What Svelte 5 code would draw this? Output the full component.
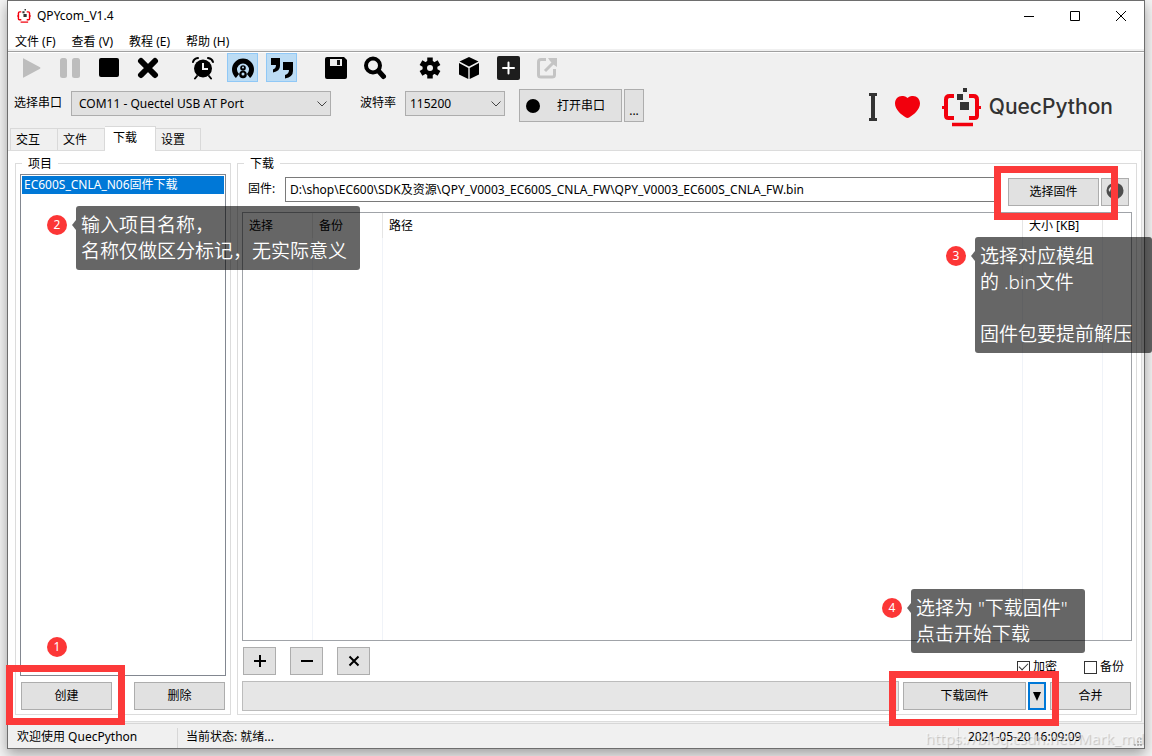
<script>
  const menus = ['文件 (F)', '查看 (V)', '教程 (E)', '帮助 (H)'];
  const tabs = ['交互', '文件', '下载', '设置'];
  let activeTab = $state('下载');
  let firmware = $state('D:\\shop\\EC600\\SDK及资源\\QPY_V0003_EC600S_CNLA_FW\\QPY_V0003_EC600S_CNLA_FW.bin');
  let encrypt = $state(true);
  let backup = $state(false);
</script>

{#snippet brackets()}
  <g fill="none" stroke="#f2000d" stroke-width="4">
    <path d="M12 8H7.500Q4 8 4 11.500V27.500Q4 30 6.500 30H12M27 8H31.500Q35 8 35 11.500V27.500Q35 30 32.500 30H27" />
    <path d="M0 19.500H4M35 19.500H39" stroke-width="3" />
    <path d="M10 36.500H31" stroke-width="3.500" />
  </g>
  <path fill="#333" d="M21 0h4v4h-4zM15 6h6v6h-6zM18 14h9v8h-9z" />
{/snippet}

<div class="page">
  <main class="window">
    <header class="titlebar">
      <svg class="app-icon" viewBox="0 0 39 39" aria-hidden="true">{@render brackets()}</svg>
      <h1>QPYcom_V1.4</h1>
      <div class="window-buttons">
        <button aria-label="最小化"><svg viewBox="0 0 10 10"><path d="M0 5.500h10" /></svg></button>
        <button aria-label="最大化"><svg viewBox="0 0 10 10"><path d="M.5.5h9v9h-9z" /></svg></button>
        <button aria-label="关闭"><svg viewBox="0 0 10 10"><path d="M0 0l10 10M10 0L0 10" /></svg></button>
      </div>
    </header>

    <nav class="menubar">
      {#each menus as menu}<button>{menu}</button>{/each}
    </nav>

    <div class="header">
      <div class="controls">
        <div class="toolbar">
          <div class="tool-group">
            <button aria-label="运行" disabled><svg viewBox="0 0 24 24"><path fill="#bdbdbd" d="M3 2.500Q3 2 3.700 2.400L20 11.200Q21 12 20 12.700L3.700 21.600Q3 22 3 21.300z" /></svg></button>
            <button aria-label="暂停" disabled><svg viewBox="0 0 24 24"><rect fill="#bdbdbd" x="1" y="2" width="7" height="20" rx="2.500" /><rect fill="#bdbdbd" x="13" y="2" width="8" height="20" rx="2.500" /></svg></button>
            <button aria-label="停止"><svg viewBox="0 0 24 24"><rect x="1" y="2" width="20" height="19" rx="2" /></svg></button>
            <button aria-label="清除"><svg viewBox="0 0 24 24"><path fill="none" stroke="#000" stroke-width="6" stroke-linecap="round" d="M4 5l14 14M18 5L4 19" /></svg></button>
          </div>
          <div class="tool-group">
            <button aria-label="定时">
              <svg viewBox="0 0 24 24">
                <circle cx="11" cy="12.500" r="9" />
                <path fill="none" stroke="#000" stroke-width="2" stroke-linecap="round" d="M1 6Q2 2.500 6 2M21 6Q20 2.500 16 2M5 20l-2 2.500M17 20l2 2.500" />
                <path fill="none" stroke="#efefef" stroke-width="2" d="M11 7v6h5" />
              </svg>
            </button>
            <button class="on" aria-label="连接">
              <svg viewBox="0 0 24 24">
                <path fill="none" stroke="#000" stroke-width="5" d="M6.500 20A8.500 8.500 0 1 1 17.500 20" />
                <circle cx="12" cy="12" r="2.800" /><circle cx="12" cy="18.500" r="3.800" />
                <circle cx="12" cy="11.500" r="1" fill="#bcdcf4" /><circle cx="12" cy="18" r="1.500" fill="#bcdcf4" />
              </svg>
            </button>
            <button class="on" aria-label="引用">
              <svg viewBox="0 0 24 24"><path d="M1 2h9v8q0 5-7 6.500v-3q3-1 3-4.500H1zM13 6h10v9q0 6-8 7.500V19q4-1 4-5h-6z" /></svg>
            </button>
          </div>
          <div class="tool-group">
            <button aria-label="保存"><svg viewBox="0 0 24 24"><path d="M2 1h17l3 3v17q0 2-2 2H2q-2 0-2-2V3q0-2 2-2z" /><path fill="#efefef" d="M5 3h12v7H5z" /><path fill="#111" d="M12 4h3v5h-3z" /></svg></button>
            <button aria-label="搜索"><svg viewBox="0 0 24 24"><circle cx="9" cy="9.500" r="7" fill="none" stroke="#000" stroke-width="4" /><path fill="none" stroke="#000" stroke-width="5" stroke-linecap="round" d="M14.500 15l5 5.500" /></svg></button>
          </div>
          <div class="tool-group">
            <button aria-label="设置">
              <svg viewBox="0 0 24 24">
                <g stroke="#000" stroke-width="5.500"><path d="M11 1.500v21M2 6.700l18 10.600M2 17.300L20 6.700" /></g>
                <circle cx="11" cy="12" r="7.500" /><circle cx="11" cy="12" r="3" fill="#efefef" />
              </svg>
            </button>
            <button aria-label="模块"><svg viewBox="0 0 24 24"><path d="M11 1l9.500 4.500L11 10.500 1.500 5.500zM1 7l9.300 5v11L1 18.500zM21 7l-9.300 5v11L21 18.500z" /></svg></button>
            <button aria-label="新增"><svg viewBox="0 0 24 24"><rect width="23" height="24" rx="2" fill="#1d1d1d" /><path fill="none" stroke="#fff" stroke-width="2" stroke-linecap="round" d="M11.500 6.500v11M6 12h11" /></svg></button>
            <button aria-label="导出" disabled><svg viewBox="0 0 24 24"><path fill="none" stroke="#c4c4c4" stroke-width="3" d="M10 3.500H5Q2.500 3.500 2.500 6v13Q2.500 21 5 21h11q2.500 0 2.500-2v-6M9 15L18 6" /><path fill="#c4c4c4" d="M12 2h9v9l-3-2-4-4z" /></svg></button>
          </div>
        </div>

        <div class="port-row">
          <label class="port-label" for="port">选择串口</label>
          <span class="combo port">
            <select id="port"><option>COM11 - Quectel USB AT Port</option></select>
            <svg viewBox="0 0 10 6" aria-hidden="true"><path d="M.5.5L5 5 9.500.5" /></svg>
          </span>
          <label class="baud-label" for="baud">波特率</label>
          <span class="combo baud">
            <select id="baud"><option>115200</option></select>
            <svg viewBox="0 0 10 6" aria-hidden="true"><path d="M.5.5L5 5 9.500.5" /></svg>
          </span>
          <button class="btn open"><i class="dot"></i><span>打开串口</span></button>
          <button class="btn more">...</button>
        </div>
      </div>

      <div class="brand">
        <svg class="letter" viewBox="0 0 8 28" aria-hidden="true"><path fill="#333" d="M0 0h8v3H6v22h2v3H0v-3h2V3H0z" /></svg>
        <svg class="heart" viewBox="0 0 25 22" aria-hidden="true"><path fill="#f2000d" d="M12.500 2C10 0 8.500 0 7 0 3 0 0 3 0 7.500 0 14 7 19 10.500 21.300Q12.500 22.700 14.500 21.300C18 19 25 14 25 7.500 25 3 22 0 18 0 16.500 0 15 0 12.500 2z" /></svg>
        <svg class="logo" viewBox="0 0 39 39" aria-hidden="true">{@render brackets()}</svg>
        <span>QuecPython</span>
      </div>
    </div>

    <div class="tabs" role="tablist">
      {#each tabs as tab}
        <button role="tab" aria-selected={tab === activeTab} class:active={tab === activeTab} onclick={() => (activeTab = tab)}>{tab}</button>
      {/each}
    </div>

    <section class="panel">
      <fieldset class="projects">
        <legend>项目</legend>
        <ul><li>EC600S_CNLA_N06固件下载</li></ul>
        <div class="project-actions">
          <button class="btn">创建</button>
          <button class="btn">删除</button>
        </div>
      </fieldset>

      <fieldset class="download">
        <legend>下载</legend>
        <div class="firmware-row">
          <label for="firmware">固件:</label>
          <input id="firmware" type="text" bind:value={firmware} />
          <button class="btn choose">选择固件</button>
          <button class="btn globe" aria-label="在线固件">
            <svg viewBox="0 0 18 18"><path fill="#4d4d4d" d="M9 0Q17 0 17.500 7.500 17.500 12 13 15L9 18 5 15Q.5 12 .5 7.500 1 0 9 0z" /><path fill="#e1e1e1" d="M2.500 7Q4 3 8 2.500L7 5 4.500 6.500 4 9z" /></svg>
          </button>
        </div>

        <div class="table-box">
          <table>
            <colgroup><col class="c-pick" /><col class="c-pick" /><col /><col class="c-size" /><col class="c-end" /></colgroup>
            <thead><tr><th>选择</th><th>备份</th><th>路径</th><th>大小 [KB]</th><th></th></tr></thead>
            <tbody><tr><td></td><td></td><td></td><td></td><td></td></tr></tbody>
          </table>
        </div>

        <div class="edit-row">
          <button class="btn" aria-label="添加"><svg viewBox="0 0 14 14"><path d="M7 1v12M1 7h12" /></svg></button>
          <button class="btn" aria-label="移除"><svg viewBox="0 0 14 14"><path d="M1 7h12" /></svg></button>
          <button class="btn" aria-label="清空"><svg viewBox="0 0 14 14"><path d="M2.500 2.500l9 9M11.500 2.500l-9 9" /></svg></button>
          <div class="checks">
            <label><input type="checkbox" bind:checked={encrypt} />加密</label>
            <label><input type="checkbox" bind:checked={backup} />备份</label>
          </div>
        </div>

        <div class="run-row">
          <div class="progress" role="progressbar" aria-valuenow="0" aria-label="进度"></div>
          <button class="btn start">下载固件</button>
          <button class="btn drop" aria-label="更多下载方式"><svg viewBox="0 0 8 9"><path d="M0 0h8L4 9z" /></svg></button>
          <button class="btn merge">合并</button>
        </div>
      </fieldset>
    </section>

    <footer class="status">
      <span class="welcome">欢迎使用 QuecPython</span>
      <span class="state">当前状态: 就绪...</span>
      <time datetime="2021-05-20T16:09:09">2021-05-20 16:09:09</time>
      <svg class="grip" viewBox="0 0 8 8" aria-hidden="true"><path d="M6 0h2v2H6zM3 3h2v2H3zM6 3h2v2H6zM0 6h2v2H0zM3 6h2v2H3zM6 6h2v2H6z" /></svg>
    </footer>
  </main>

  <div class="watermark">https://blog.csdn.net/Mark_md</div>

  <div class="frame create-frame"></div>
  <div class="frame choose-frame"></div>
  <div class="frame start-frame"></div>

  <div class="note note-1"><b>1</b></div>
  <div class="note note-2"><b>2</b><p>输入项目名称，<br />名称仅做区分标记，无实际意义</p></div>
  <div class="note note-3"><b>3</b><p>选择对应模组<br />的 .bin文件<br /><br />固件包要提前解压</p></div>
  <div class="note note-4"><b>4</b><p>选择为 "下载固件"<br />点击开始下载</p></div>
</div>

<style>
  :global(body) { margin: 0; }
  .page, .page * { box-sizing: border-box; }
  .page {
    position: relative;
    display: flex;
    height: 100vh;
    min-height: 480px;
    padding: 0 7px 7px;
    overflow: hidden;
    background: #f4f4f4;
    font: 12px/18px "Noto Sans", "Noto Sans CJK SC", sans-serif;
    color: #000;
  }
  button, input, select { font: inherit; color: inherit; border-radius: 0; }
  button { padding: 0; border: 0; background: none; }
  svg { display: block; }

  .window {
    flex: 1;
    min-width: 0;
    display: flex;
    flex-direction: column;
    border: 1px solid #6e6e6e;
    background: #f0f0f0;
    box-shadow: 0 5px 12px rgba(0, 0, 0, 0.35);
  }

  .titlebar { display: flex; align-items: center; height: 30px; padding-left: 9px; background: #fff; }
  .app-icon { width: 14px; height: 14px; }
  h1 { margin: 0 0 0 6px; font-size: 12px; font-weight: 400; }
  .window-buttons { display: flex; align-self: stretch; margin-left: auto; }
  .window-buttons button { display: grid; place-items: center; width: 46px; }
  .window-buttons svg { width: 10px; height: 10px; fill: none; stroke: #000; stroke-width: 1; }

  .menubar { display: flex; gap: 16px; height: 18px; padding: 2px 0 0 7px; background: #fff; }

  .header {
    display: flex;
    justify-content: space-between;
    margin-top: 2px;
    border-top: 1px solid #a0a0a0;
    box-shadow: inset 0 1px #fff;
    padding-top: 1px;
  }
  .controls { display: flex; flex-direction: column; gap: 7px; }
  .toolbar { display: flex; gap: 24px; padding-left: 8px; }
  .tool-group { display: flex; gap: 8px; }
  .toolbar button { display: grid; place-items: center; width: 31px; height: 29px; border: 1px solid transparent; }
  .toolbar button.on { border-color: #90c8f6; background: #bcdcf4; }
  .toolbar svg { width: 24px; height: 24px; }

  .port-row { display: flex; align-items: flex-start; padding-left: 6px; }
  .port-row label { padding-top: 5px; }
  .port-label { width: 57px; }
  .baud-label { width: 45px; margin-left: 29px; }
  .combo { display: grid; align-items: center; height: 25px; margin-top: 2px; }
  .combo.port { width: 260px; }
  .combo.baud { width: 100px; }
  .combo select {
    grid-area: 1 / 1;
    width: 100%;
    height: 25px;
    padding: 0 20px 0 4px;
    border: 1px solid #adadad;
    background: #e1e1e1;
    appearance: none;
  }
  .combo.port select { padding-left: 7px; }
  .combo svg { grid-area: 1 / 1; justify-self: end; width: 10px; height: 6px; margin-right: 4px; fill: none; stroke: #444; pointer-events: none; }

  .btn { display: flex; align-items: center; justify-content: center; border: 1px solid #adadad; background: #e1e1e1; }
  .open { justify-content: flex-start; gap: 17px; width: 103px; height: 33px; margin-left: 14px; padding-left: 6px; }
  .dot { width: 14px; height: 14px; border-radius: 50%; background: #000; }
  .more { align-items: flex-end; width: 20px; height: 33px; margin-left: 2px; padding-bottom: 1px; }

  .brand { display: flex; align-items: center; align-self: flex-end; height: 38px; margin-right: 31px; margin-bottom: -4px; font: 500 21px/26px Inter, "Open Sans", sans-serif; color: #333; }
  .letter { width: 8px; height: 28px; }
  .heart { width: 25px; height: 22px; margin-left: 18px; }
  .logo { width: 39px; height: 39px; margin: 0 8px 0 22px; }

  .tabs { display: flex; align-items: flex-end; height: 28px; padding-left: 2px; }
  .tabs button { width: 47px; height: 22px; padding-left: 5px; border: 1px solid #d9d9d9; border-bottom: 0; border-left-width: 0; text-align: left; }
  .tabs button:first-child { width: 48px; border-left-width: 1px; }
  .tabs button:last-child { width: 45px; }
  .tabs button.active { width: 51px; height: 25px; margin-bottom: -1px; padding-left: 8px; padding-bottom: 2px; background: #fff; z-index: 1; }

  .panel {
    flex: 1;
    min-height: 0;
    display: flex;
    gap: 6px;
    margin-right: 2px;
    padding: 3px 4px 6px 7px;
    border: 1px solid #dcdcdc;
    border-left: 0;
    background: #fff;
  }
  fieldset { display: flex; flex-direction: column; min-width: 0; margin: 0; padding: 2px 4px 4px; border: 1px solid #dcdcdc; }
  legend { height: 18px; margin-left: 2px; padding: 0 6px; line-height: 20px; }
  .projects { width: 216px; flex: none; }
  .download { flex: 1; }

  ul { flex: 1; margin: 0; padding: 1px; border: 1px solid #828790; list-style: none; }
  li { height: 18px; padding-left: 2px; background: #0078d7; color: #fff; white-space: nowrap; }
  .project-actions { display: flex; justify-content: space-between; margin-top: 6px; padding: 0 1px; }
  .project-actions .btn { width: 91px; height: 28px; }

  .firmware-row { display: flex; align-items: flex-start; padding: 3px 3px 0 6px; }
  .firmware-row label { width: 37px; padding-top: 3px; }
  .firmware-row input { flex: 1; min-width: 0; height: 25px; padding: 0 4px 2px; border: 1px solid #7a7a7a; background: #fff; outline: 0; }
  .choose { width: 91px; height: 28px; margin: 1px 2px 0 7px; }
  .globe { width: 28px; height: 28px; margin-top: 1px; }
  .globe svg { width: 18px; height: 18px; }

  .table-box { flex: 1; min-height: 0; display: grid; margin-top: 6px; border: 1px solid #a0a3a8; }
  table { width: 100%; height: 100%; border-collapse: separate; border-spacing: 0; table-layout: fixed; }
  .c-pick { width: 70px; }
  .c-size { width: 80px; }
  .c-end { width: 28px; }
  th { height: 25px; padding: 0 6px; border-right: 1px solid #e5e5e5; font-weight: 400; text-align: left; }
  td { padding: 0; border-right: 1px solid #f0f3f8; }
  th:last-child, td:last-child { border-right: 0; }

  .edit-row { display: flex; gap: 14px; margin-top: 6px; padding-left: 1px; }
  .edit-row .btn { width: 33px; height: 28px; }
  .edit-row .btn svg { width: 14px; height: 14px; fill: none; stroke: #000; stroke-width: 2; }
  .checks { display: flex; align-items: flex-end; gap: 27px; margin-left: auto; padding-right: 8px; }
  .checks label { display: flex; align-items: center; gap: 3px; height: 16px; }
  .checks input {
    display: grid;
    place-items: center;
    width: 13px;
    height: 13px;
    margin: 0;
    border: 1px solid #333;
    background: #fff;
    appearance: none;
  }
  .checks input:checked::before { content: ""; width: 8px; height: 4px; margin-top: -3px; border: solid #333; border-width: 0 0 1px 1px; transform: rotate(-45deg); }

  .run-row { display: flex; align-items: center; margin-top: 6px; padding-right: 1px; }
  .progress { flex: 1; height: 30px; border: 1px solid #bcbcbc; background: #e6e6e6; }
  .run-row .btn { height: 28px; }
  .start { width: 123px; margin: 0 2px 0 4px; }
  .run-row .drop { width: 18px; border: 2px solid #0078d7; }
  .drop svg { width: 8px; height: 9px; }
  .merge { width: 81px; margin-left: 4px; }
  .download { padding-bottom: 3px; }

  .status { display: flex; height: 25px; margin-top: 1px; padding-top: 4px; border-top: 1px solid #d7d7d7; }
  .status span, time { padding-left: 9px; }
  .status .welcome { width: 170px; border-right: 1px solid #d7d7d7; }
  .status .state { flex: 1; padding-left: 8px; }
  time { width: 178px; border-left: 1px solid #d7d7d7; }
  .grip { align-self: flex-end; width: 8px; height: 8px; margin: 0 2px 2px -2px; fill: #bbb; }

  .watermark {
    position: absolute;
    right: 8px;
    bottom: 6px;
    font-size: 15px;
    line-height: 24px;
    color: rgba(255, 255, 255, 0.5);
    text-shadow: 1px 1px 1px rgba(0, 0, 0, 0.2);
    pointer-events: none;
  }

  .frame { position: absolute; border: 7px solid #fc3a3a; pointer-events: none; }
  .create-frame { left: 6px; bottom: 31px; width: 119px; height: 60px; }
  .choose-frame { right: 34px; top: 166px; width: 124px; height: 54px; }
  .start-frame { right: 93px; bottom: 30px; width: 170px; height: 55px; }

  .note { position: absolute; display: flex; align-items: flex-start; gap: 9px; pointer-events: none; }
  .note b { width: 20px; height: 20px; border-radius: 50%; background: #fc3636; color: #fff; font-weight: 400; line-height: 20px; text-align: center; }
  .note p {
    position: relative;
    margin: 0;
    padding: 6px 13px 6px 5px;
    border-radius: 3px;
    background: rgba(0, 0, 0, 0.6);
    color: #fff;
    font-size: 19px;
    font-weight: 350;
    line-height: 26px;
    white-space: nowrap;
  }
  .note p::before { content: ""; position: absolute; left: -4px; top: 14px; border: 5px solid transparent; border-left: 0; border-right: 4px solid rgba(0, 0, 0, 0.6); }
  .note:has(p) b { margin-top: 9px; }
  .note-1 { left: 47px; bottom: 99px; }
  .note-2 { left: 47px; top: 206px; }
  .note-3 { right: 0; top: 237px; }
  .note-3 p { min-width: 177px; }
  .note-4 { right: 67px; bottom: 103px; }
  .note-4 p { min-width: 174px; }
  .note-4 b { margin-top: 7px; }
</style>
